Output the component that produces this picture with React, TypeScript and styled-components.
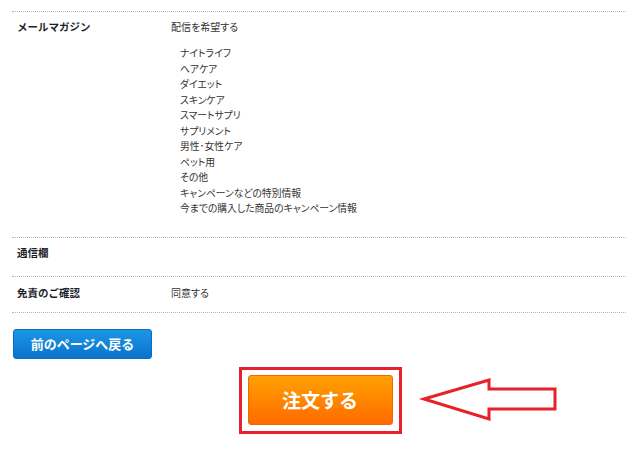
import React from "react";
import styled, { createGlobalStyle } from "styled-components";

const GlobalStyle = createGlobalStyle`
  html, body {
    margin: 0;
    padding: 0;
    background: #ffffff;
  }
  body {
    font-family: "Noto Sans CJK JP", "Noto Sans", sans-serif;
    color: #333333;
  }
`;

const Page = styled.div`
  width: 614px;
  padding: 11px 14px 0 12px;
`;

const Table = styled.div`
  border-top: 1px dotted #b5b5b5;
`;

const Row = styled.div<{ $pt: number; $pb: number }>`
  display: grid;
  grid-template-columns: 159px 1fr;
  padding: ${(p) => p.$pt}px 0 ${(p) => p.$pb}px 0;
  border-bottom: 1px dotted #b5b5b5;
`;

const Label = styled.div`
  padding-left: 5px;
  font-size: 10.5px;
  line-height: 16px;
  font-weight: bold;
  color: #1f1f2a;
`;

const Value = styled.div`
  font-size: 10px;
  line-height: 16px;
  color: #333333;
  font-feature-settings: "palt";
`;

const OptionList = styled.ul`
  list-style: none;
  margin: 11px 0 0 0;
  padding: 0 0 0 9px;
`;

const OptionItem = styled.li`
  font-size: 9.8px;
  line-height: 15.5px;
  color: #333333;
  font-feature-settings: "palt";
`;

const BackButton = styled.button`
  display: flex;
  align-items: center;
  justify-content: center;
  margin: 16px 0 0 1px;
  width: 139px;
  height: 30px;
  border: 1px solid #0b6cc0;
  border-radius: 3px;
  background: linear-gradient(#1c97e6, #0a72cc);
  color: #ffffff;
  font-family: "Noto Sans CJK JP", sans-serif;
  font-size: 13px;
  font-weight: bold;
  padding: 0;
  cursor: pointer;
`;

const OrderArea = styled.div`
  display: flex;
  justify-content: center;
  margin-top: 8px;
`;

const Highlight = styled.div`
  position: relative;
  width: 157px;
  height: 61px;
  border: 3px solid #e8202a;
  display: flex;
  align-items: flex-start;
  justify-content: center;
  padding: 0;
`;

const OrderButton = styled.button`
  margin: 5px 0 0 0;
  width: 145px;
  height: 50px;
  border: 1px solid #f06a00;
  border-radius: 3px;
  background: linear-gradient(#ffa200, #ff6a00);
  color: #ffffff;
  font-family: "Noto Sans CJK JP", sans-serif;
  font-size: 19px;
  font-weight: bold;
  padding: 0;
  cursor: pointer;
`;

const ArrowMark = styled.svg`
  position: absolute;
  left: calc(100% + 17px);
  top: 6px;
`;

const options = [
  "ナイトライフ",
  "ヘアケア",
  "ダイエット",
  "スキンケア",
  "スマートサプリ",
  "サプリメント",
  "男性･女性ケア",
  "ペット用",
  "その他",
  "キャンペーンなどの特別情報",
  "今までの購入した商品のキャンペーン情報",
];

export default function App() {
  return (
    <>
      <GlobalStyle />
      <Page>
        <Table>
          <Row $pt={7} $pb={20}>
            <Label>メールマガジン</Label>
            <div>
              <Value>配信を希望する</Value>
              <OptionList>
                {options.map((o) => (
                  <OptionItem key={o}>{o}</OptionItem>
                ))}
              </OptionList>
            </div>
          </Row>
          <Row $pt={7} $pb={15}>
            <Label>通信欄</Label>
            <Value></Value>
          </Row>
          <Row $pt={8} $pb={11}>
            <Label>免責のご確認</Label>
            <Value>同意する</Value>
          </Row>
        </Table>
        <BackButton>前のページへ戻る</BackButton>
      </Page>
      <OrderArea>
        <Highlight>
          <OrderButton>注文する</OrderButton>
          <ArrowMark width="144" height="48" viewBox="0 0 144 48">
            <polygon
              points="8,23 73,4 73,13 139,13 139,33 73,33 73,43"
              fill="none"
              stroke="#e8202a"
              strokeWidth="3"
            />
          </ArrowMark>
        </Highlight>
      </OrderArea>
    </>
  );
}
